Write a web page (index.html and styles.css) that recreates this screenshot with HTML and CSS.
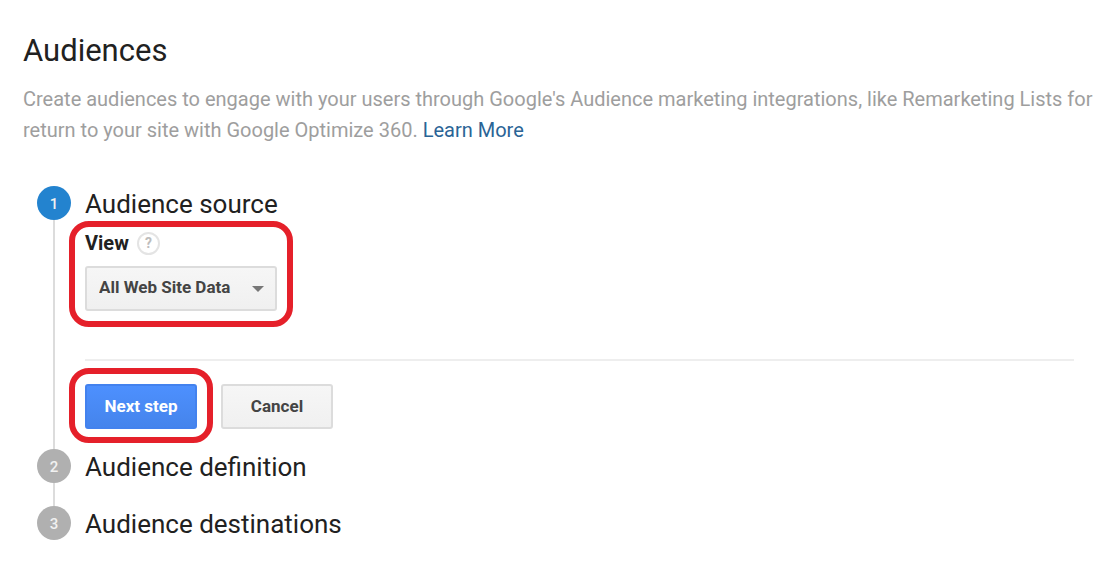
FILE: index.html
```html
<!DOCTYPE html>
<html lang="en">
    <head>
        <meta charset="UTF-8">
        <meta name="viewport" content="width=device-width, initial-scale=1">
        <title>Audiences</title>
        <link rel="stylesheet" href="styles.css">
    </head>
    <body>

        <h1>Audiences</h1>
        <p class="intro">Create audiences to engage with your users through Google's Audience marketing integrations, like Remarketing Lists for<br>
        return to your site with Google Optimize 360. <a href="#">Learn More</a></p>

        <ol class="steps">
            <li class="step active">
                <span class="number">1</span>
                <div class="content">
                    <h2>Audience source</h2>
                    <div class="field marked">
                        <div class="field-label">
                            <label for="view">View</label>
                            <button type="button" class="help" aria-label="Help">?</button>
                        </div>
                        <div class="dropdown">
                            <select id="view">
                                <option>All Web Site Data</option>
                            </select>
                            <svg class="arrow" width="12" height="6" viewBox="0 0 12 6"><path d="M0 0h12L6 6z" fill="#777"/></svg>
                        </div>
                    </div>
                    <div class="actions">
                        <div class="marked">
                            <button type="button" class="btn primary">Next step</button>
                        </div>
                        <button type="button" class="btn">Cancel</button>
                    </div>
                </div>
            </li>
            <li class="step">
                <span class="number">2</span>
                <h2>Audience definition</h2>
            </li>
            <li class="step">
                <span class="number">3</span>
                <h2>Audience destinations</h2>
            </li>
        </ol>

    </body>
</html>
```

FILE: styles.css
```css
* {
    box-sizing: border-box;
}

body {
    margin: 0;
    padding: 32px 0 24px 23px;
    background: #fff;
    color: #212121;
    font-family: Roboto, sans-serif;
    overflow-x: hidden;
}

h1, h2, p, ol {
    margin: 0;
    padding: 0;
    font-weight: 400;
}

h1 {
    font-size: 31px;
    line-height: 38px;
}

.intro {
    margin-top: 14px;
    color: #9e9e9e;
    font-size: 20px;
    line-height: 31px;
    white-space: nowrap;
}

.intro a {
    color: #2a6496;
    text-decoration: none;
}

/* Steps */
.steps {
    margin: 40px 29px 0 14px;
    list-style: none;
}

.step {
    position: relative;
    display: flex;
    gap: 14px;
    padding-bottom: 21px;
}

.step.active {
    padding-bottom: 20px;
}

.step:last-child {
    padding-bottom: 0;
}

/* line down to the next step */
.step:not(:last-child)::before {
    content: "";
    position: absolute;
    top: 34px;
    bottom: 0;
    left: 16px;
    width: 2px;
    background: #dcdcdc;
}

.number {
    flex: none;
    width: 34px;
    height: 34px;
    border-radius: 50%;
    background: #b0b0b0;
    color: #f1f1f1;
    font-size: 15px;
    font-weight: 500;
    line-height: 36px;
    text-align: center;
}

.active .number {
    background: #2383cf;
}

.content {
    flex: 1;
}

h2 {
    font-size: 26px;
    line-height: 36px;
}

/* Red frame around the controls to use */
.marked {
    position: relative;
    width: max-content;
}

.marked::after {
    content: "";
    position: absolute;
    inset: -16px;
    border: 6px solid #e5202a;
    border-radius: 20px;
    pointer-events: none;
}

.actions .marked::after {
    bottom: -14px;
}

.field {
    margin-top: 15px;
}

.field-label {
    display: flex;
    align-items: center;
    gap: 8px;
    height: 12px;
    margin-bottom: 17px;
    font-size: 20px;
    font-weight: 700;
}

.help {
    width: 23px;
    height: 23px;
    padding: 0;
    border: 2px solid #e4e4e4;
    border-radius: 50%;
    background: #fff;
    color: #bdbdbd;
    font: 700 14px/18px Roboto, sans-serif;
}

.dropdown {
    position: relative;
    width: 192px;
}

.dropdown select {
    appearance: none;
    width: 100%;
    height: 45px;
    padding: 0 36px 3px 12px;
}

.arrow {
    position: absolute;
    top: 20px;
    right: 13px;
    pointer-events: none;
}

.btn,
.dropdown select {
    border: 2px solid #dcdcdc;
    border-radius: 3px;
    background: linear-gradient(#f6f6f6, #f0f0f0);
    color: #444;
    font: 700 17px/20px Roboto, sans-serif;
}

.actions {
    display: flex;
    gap: 24px;
    margin-top: 48px;
    padding-top: 23px;
    border-top: 2px solid #eee;
}

.btn {
    display: block;
    width: 112px;
    height: 45px;
    padding: 0 0 2px;
}

.btn.primary {
    border-color: #4382ee;
    background: linear-gradient(#4d90fe, #4584ec);
    color: #fff;
}
```
